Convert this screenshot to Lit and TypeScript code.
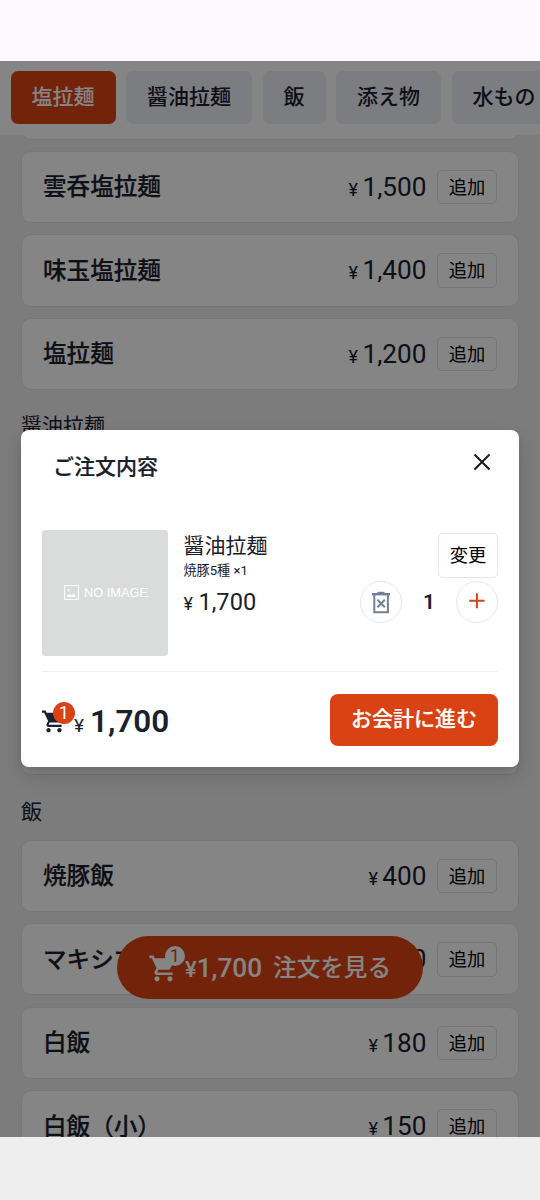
import { LitElement, html, css, svg } from "lit";
import { customElement, property } from "lit/decorators.js";

interface MenuItem {
  name: string;
  price: string;
}

const FONT = css`Roboto, "Noto Sans CJK JP", sans-serif`;

const SALT: MenuItem[] = [
  { name: "", price: "" },
  { name: "雲呑塩拉麺", price: "1,500" },
  { name: "味玉塩拉麺", price: "1,400" },
  { name: "塩拉麺", price: "1,200" },
];

const SOY: MenuItem[] = [
  { name: "", price: "" },
  { name: "", price: "" },
  { name: "", price: "" },
  { name: "", price: "" },
];

const RICE: MenuItem[] = [
  { name: "焼豚飯", price: "400" },
  { name: "マキシマ", price: "400" },
  { name: "白飯", price: "180" },
  { name: "白飯（小）", price: "150" },
];

const cartPath = svg`<path fill="currentColor" d="M7 18c-1.1 0-1.99.9-1.99 2S5.9 22 7 22s2-.9 2-2-.9-2-2-2zM1 2v2h2l3.6 7.59-1.35 2.45c-.16.28-.25.61-.25.96 0 1.1.9 2 2 2h12v-2H7.42c-.14 0-.25-.11-.25-.25l.03-.12.9-1.63h7.45c.75 0 1.41-.41 1.75-1.03l3.58-6.49A1 1 0 0 0 20 4H5.21l-.94-2H1zm16 16c-1.1 0-1.99.9-1.99 2s.89 2 1.99 2 2-.9 2-2-.9-2-2-2z"/>`;

@customElement("menu-card")
export class MenuCard extends LitElement {
  @property() name = "";
  @property() price = "";

  static styles = css`
    :host {
      display: block;
      box-sizing: border-box;
      height: 72.4px;
      border: 1px solid #e4e4e6;
      border-radius: 10px;
      background: #fff;
      font-family: ${FONT};
      color: #1b202c;
    }
    .row {
      display: flex;
      align-items: center;
      height: 100%;
      padding: 0 21px;
      white-space: nowrap;
    }
    .name {
      flex: 1;
      font-size: 23.6px;
      font-weight: 500;
      line-height: 34px;
      padding-top: 1px;
      -webkit-text-stroke: 0.2px currentColor;
    }
    .price {
      display: flex;
      align-items: baseline;
      gap: 4.5px;
      padding-top: 3px;
      font-size: 26.2px;
      line-height: 34px;
    }
    .yen {
      font-size: 18px;
    }
    .add {
      box-sizing: border-box;
      width: 60px;
      height: 34.5px;
      margin: 0.5px 0 0 10.5px;
      border: 1px solid #dfe3ea;
      border-radius: 5px;
      font-size: 18.3px;
      line-height: 33px;
      text-align: center;
      color: #000;
    }
  `;

  render() {
    if (!this.name) return html``;
    return html`
      <div class="row">
        <div class="name">${this.name}</div>
        <div class="price"><span class="yen">¥</span><span>${this.price}</span></div>
        <div class="add">追加</div>
      </div>
    `;
  }
}

@customElement("order-dialog")
export class OrderDialog extends LitElement {
  static styles = css`
    :host {
      display: block;
      box-sizing: border-box;
      width: 498px;
      height: 336.5px;
      padding: 0 21px;
      border-radius: 8px;
      background: #fff;
      box-shadow: 0 10px 20px rgba(0, 0, 0, 0.12), 0 4px 8px rgba(0, 0, 0, 0.08);
      font-family: ${FONT};
      color: #1b202c;
      white-space: nowrap;
    }
    .head {
      display: flex;
      justify-content: space-between;
      height: 99.5px;
      padding-left: 11px;
    }
    .title {
      padding-top: 20.5px;
      font-size: 21px;
      font-weight: 500;
      line-height: 32px;
      -webkit-text-stroke: 0.2px currentColor;
    }
    .close {
      width: 18px;
      height: 18px;
      margin: 22.5px 7px 0 0;
    }
    .item {
      display: flex;
      height: 142.5px;
      box-sizing: border-box;
      border-bottom: 1px solid #eeeff0;
    }
    .image {
      display: flex;
      align-items: center;
      justify-content: center;
      gap: 5px;
      box-sizing: border-box;
      width: 126px;
      height: 126px;
      padding-left: 2px;
      border-radius: 4px;
      background: #dadcdb;
      color: #fff;
      font: 12.8px "Liberation Sans", sans-serif;
    }
    .image svg {
      width: 15px;
      height: 15px;
    }
    .info {
      flex: 1;
      padding-left: 15.5px;
    }
    .name {
      padding-top: 1px;
      font-size: 21px;
      line-height: 30px;
    }
    .option {
      font-size: 13.1px;
      line-height: 20px;
    }
    .price {
      display: flex;
      align-items: baseline;
      gap: 5.5px;
      margin-top: 7px;
      font-size: 23.6px;
      line-height: 28px;
    }
    .yen {
      font-size: 18px;
    }
    .actions {
      display: flex;
      flex-direction: column;
      align-items: flex-end;
      width: 138px;
      padding-top: 3px;
    }
    .change {
      box-sizing: border-box;
      width: 60px;
      height: 45px;
      border: 1px solid #e2e6ee;
      border-radius: 5px;
      font-size: 18.3px;
      line-height: 43px;
      text-align: center;
      color: #000;
    }
    .stepper {
      display: flex;
      align-items: center;
      justify-content: space-between;
      width: 138px;
      margin-top: 3.5px;
    }
    .round {
      display: flex;
      box-sizing: border-box;
      width: 42px;
      height: 42px;
      border: 1px solid #e2e8f0;
      border-radius: 50%;
    }
    .round svg {
      width: 40px;
      height: 40px;
    }
    .count {
      font-size: 21px;
      font-weight: 600;
    }
    .foot {
      display: flex;
      align-items: flex-start;
      padding-top: 21.5px;
    }
    .cart {
      position: relative;
      width: 32px;
      height: 52px;
    }
    .cart svg {
      display: block;
      width: 24px;
      height: 26px;
      margin-top: 15.5px;
    }
    .badge {
      position: absolute;
      left: 11px;
      top: 8px;
      width: 22px;
      height: 22px;
      border-radius: 50%;
      background: #d94213;
      color: #fff;
      font-size: 18.3px;
      line-height: 22px;
      text-align: center;
    }
    .total {
      display: flex;
      flex: 1;
      align-items: baseline;
      gap: 6px;
      font-size: 31.5px;
      font-weight: 600;
      line-height: 56px;
    }
    .total .yen {
      font-size: 19px;
      font-weight: 400;
    }
    .checkout {
      width: 168px;
      height: 52.5px;
      border-radius: 8px;
      background: #d94213;
      color: #fff;
      font-size: 21px;
      font-weight: 500;
      line-height: 51px;
      text-align: center;
      -webkit-text-stroke: 0.2px currentColor;
    }
  `;

  render() {
    return html`
      <div class="head">
        <div class="title">ご注文内容</div>
        <svg class="close" viewBox="0 0 18 18"><path d="M1.5 1.5 16.5 16.5M16.5 1.5 1.5 16.5" stroke="#16191f" stroke-width="2"/></svg>
      </div>
      <div class="item">
        <div class="image">
          <svg viewBox="0 0 15 15"><rect x=".6" y=".6" width="13.8" height="13.8" fill="none" stroke="#fff" stroke-width="1"/><path d="M3.4 12v-2l2-1 2.4 1.4 2-2 2 3.6z" fill="#fff"/><circle cx="4.6" cy="5.5" r=".9" fill="#fff"/></svg>
          <span>NO IMAGE</span>
        </div>
        <div class="info">
          <div class="name">醤油拉麺</div>
          <div class="option">焼豚5種 ×1</div>
          <div class="price"><span class="yen">¥</span><span>1,700</span></div>
        </div>
        <div class="actions">
          <div class="change">変更</div>
          <div class="stepper">
            <div class="round">
              <svg viewBox="0 0 40 40" fill="none" stroke="#718096" stroke-width="2"><path d="M11 12.2h18" stroke-width="2.4"/><path d="M16.5 10.8h7"/><path d="M13.3 13v17.2h13.6V13"/><path d="m16.4 17.7 7.4 7.6m0-7.6-7.4 7.6"/></svg>
            </div>
            <div class="count">1</div>
            <div class="round">
              <svg viewBox="0 0 40 40" fill="none" stroke="#d94213" stroke-width="2"><path d="M12.2 18.8h15.4M19.9 11.3v15"/></svg>
            </div>
          </div>
        </div>
      </div>
      <div class="foot">
        <div class="cart">
          <svg viewBox="1 1 22 23">${cartPath}</svg>
          <div class="badge">1</div>
        </div>
        <div class="total"><span class="yen">¥</span><span>1,700</span></div>
        <div class="checkout">お会計に進む</div>
      </div>
    `;
  }
}

@customElement("app-root")
export class AppRoot extends LitElement {
  static styles = css`
    :host {
      display: flex;
      flex-direction: column;
      width: 540px;
      height: 1200px;
      overflow: hidden;
      background: #fdf9ff;
      font-family: ${FONT};
      color: #1b202c;
      white-space: nowrap;
    }
    .status {
      height: 60.5px;
      flex: none;
    }
    .screen {
      position: relative;
      flex: none;
      height: 1076px;
      overflow: hidden;
      background: #eee;
    }
    .tabs {
      position: relative;
      display: flex;
      box-sizing: border-box;
      gap: 10.5px;
      height: 74px;
      padding: 10.5px;
      background: #fff;
    }
    .tab {
      flex: none;
      height: 53px;
      padding: 0 21px;
      border-radius: 7px;
      background: #edeff5;
      font-size: 21px;
      font-weight: 500;
      line-height: 52px;
    }
    .active {
      background: #dc4413;
      color: #fff;
    }
    .menu {
      margin-top: -67.3px;
      padding: 0 21px;
    }
    .cards {
      display: grid;
      gap: 11.1px;
    }
    .section {
      height: 64.2px;
      font-size: 21px;
      line-height: 74px;
    }
    .soy {
      height: 62.5px;
      line-height: 72px;
    }
    .order {
      position: absolute;
      left: 117px;
      top: 875.5px;
      display: flex;
      align-items: center;
      box-sizing: border-box;
      width: 306px;
      height: 63px;
      padding-left: 31px;
      border-radius: 32px;
      background: #dc4413;
      color: #fff;
      font-size: 26.2px;
      font-weight: 500;
    }
    .cart {
      position: relative;
      width: 37px;
      height: 63px;
    }
    .cart svg {
      display: block;
      width: 31px;
      height: 31px;
      margin-top: 16.5px;
    }
    .count {
      position: absolute;
      left: 17px;
      top: 10px;
      width: 20px;
      height: 20px;
      border-radius: 50%;
      background: #fff;
      color: #dc4413;
      font-size: 18.3px;
      font-weight: 400;
      line-height: 20px;
      text-align: center;
    }
    .yen {
      font-size: 22px;
    }
    .view {
      margin-left: 11px;
      padding-bottom: 3.5px;
      font-size: 23.6px;
    }
    .overlay {
      position: absolute;
      inset: 0;
      display: grid;
      place-items: center;
      background: rgba(0, 0, 0, 0.48);
    }
    .bottom {
      flex: 1;
      background: #eee;
    }
  `;

  private cards(items: MenuItem[]) {
    return html`<div class="cards">
      ${items.map((i) => html`<menu-card .name=${i.name} .price=${i.price}></menu-card>`)}
    </div>`;
  }

  render() {
    return html`
      <div class="status"></div>
      <div class="screen">
        <div class="tabs">
          ${["塩拉麺", "醤油拉麺", "飯", "添え物", "水もの"].map(
            (t, i) => html`<div class="tab ${i === 0 ? "active" : ""}">${t}</div>`
          )}
        </div>
        <div class="menu">
          ${this.cards(SALT)}
          <div class="section soy">醤油拉麺</div>
          ${this.cards(SOY)}
          <div class="section">飯</div>
          ${this.cards(RICE)}
        </div>
        <div class="order">
          <div class="cart">
            <svg viewBox="0 0 24 24">${cartPath}</svg>
            <div class="count">1</div>
          </div>
          <span><span class="yen">¥</span>1,700</span>
          <span class="view">注文を見る</span>
        </div>
        <div class="overlay"><order-dialog></order-dialog></div>
      </div>
      <div class="bottom"></div>
    `;
  }
}
